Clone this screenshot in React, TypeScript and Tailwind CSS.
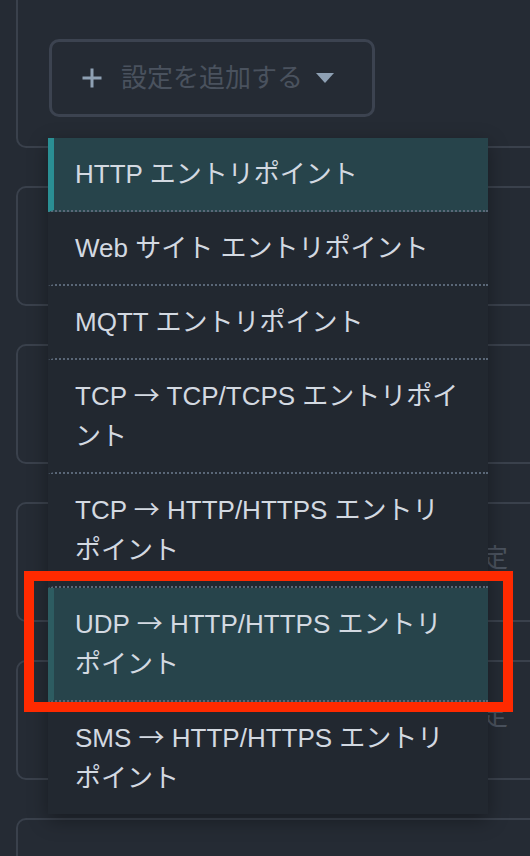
import React from "react";

type Option = {
  lines: string[];
  state?: "active" | "hover";
};

const options: Option[] = [
  { lines: ["HTTP エントリポイント"], state: "active" },
  { lines: ["Web サイト エントリポイント"] },
  { lines: ["MQTT エントリポイント"] },
  { lines: ["TCP → TCP/TCPS エントリポイ", "ント"] },
  { lines: ["TCP → HTTP/HTTPS エントリ", "ポイント"] },
  { lines: ["UDP → HTTP/HTTPS エントリ", "ポイント"], state: "hover" },
  { lines: ["SMS → HTTP/HTTPS エントリ", "ポイント"] },
];

// the arrow glyph reads better from the CJK font (full-width, thin)
function Line({ text }: { text: string }) {
  const parts = text.split("→");
  return (
    <div className="h-[40px] whitespace-nowrap">
      {parts.map((p, i) => (
        <React.Fragment key={i}>
          {i > 0 && <span className="font-['Noto_Sans_CJK_JP',sans-serif] leading-none">→</span>}
          {p}
        </React.Fragment>
      ))}
    </div>
  );
}

function Card({ label }: { label?: string }) {
  return (
    <div className="mt-[38px] flex h-[120px] items-center justify-end rounded-[10px] border-2 border-[#3a414c] pr-[90px]">
      {label && <span className="-mt-[8px] text-[26px] text-[#4a525e]">{label}</span>}
    </div>
  );
}

function AddButton() {
  return (
    <button
      type="button"
      className="flex h-[78px] w-[326px] items-center rounded-[10px] border-[3px] border-[#3c4350] pl-[29px] text-left"
    >
      <svg width="22" height="22" viewBox="0 0 22 22" className="shrink-0">
        <path d="M11 1.5v19M1.5 11h19" stroke="#8fa1b4" strokeWidth="3" />
      </svg>
      <span className="ml-[18px] text-[26px] leading-none text-[#4a525e]">設定を追加する</span>
      <svg width="20" height="12" viewBox="0 0 20 12" className="ml-[12px] shrink-0">
        <path d="M1 1h18L10 11z" fill="#8fa1b4" />
      </svg>
    </button>
  );
}

function Dropdown() {
  return (
    <div className="absolute left-[48px] top-[138px] w-[440px] bg-[#222830] shadow-[0_6px_18px_rgba(0,0,0,0.35)]">
      {options.map((opt, i) => (
        <div
          key={i}
          className={`border-l-[6px] py-4 pl-[21px] pr-4 text-[26px] leading-[40px] text-[#d3d9e1] ${
            i < options.length - 1 ? "border-b-2 border-b-[#5a6777] [border-bottom-style:dotted]" : ""
          } ${
            opt.state === "active"
              ? "border-l-[#2a8f94] bg-[#27444b]"
              : opt.state === "hover"
              ? "border-l-[#2d5c61] bg-[#27444b]"
              : "border-l-transparent"
          }`}
        >
          {opt.lines.map((line, j) => (
            <Line key={j} text={line} />
          ))}
        </div>
      ))}
    </div>
  );
}

export default function App() {
  return (
    <div className="relative h-[856px] w-[530px] overflow-hidden bg-[#252b34] font-['Liberation_Sans','Noto_Sans_CJK_JP',sans-serif]">
      <div className="w-[600px] pl-4">
        <div className="h-[148px] rounded-b-[10px] border-2 border-t-0 border-[#3a414c] pl-[31px] pt-[39px]">
          <AddButton />
        </div>
        <Card />
        <Card />
        <Card label="設定" />
        <Card label="設定" />
        <Card />
      </div>

      <Dropdown />

      {/* highlight annotation */}
      <div className="pointer-events-none absolute left-[24px] top-[571px] h-[141px] w-[489px] border-[10px] border-[#ff2a00]" />
    </div>
  );
}
